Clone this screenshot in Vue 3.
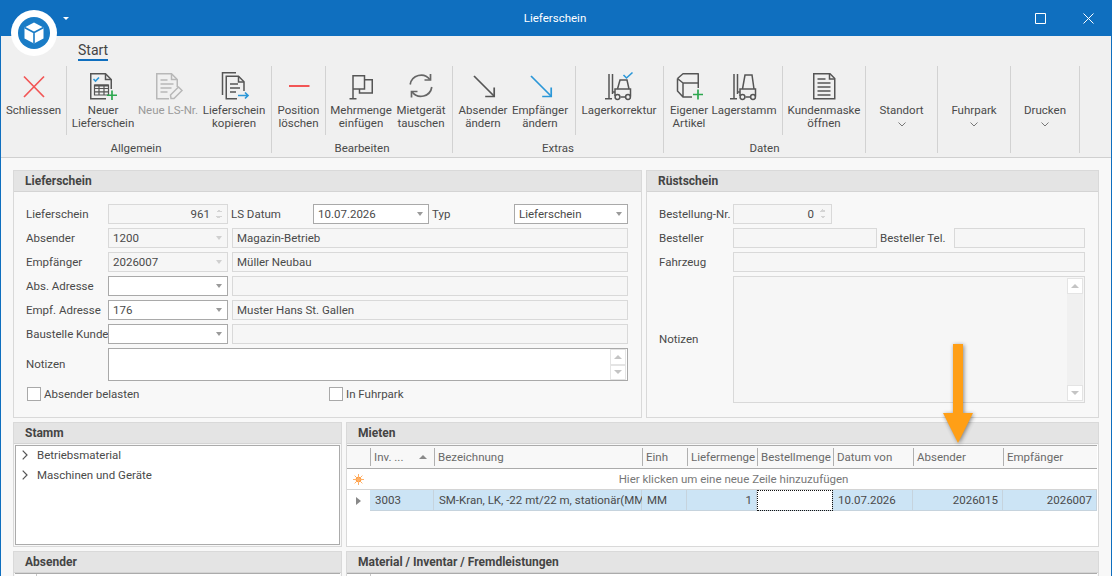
<template>
  <div class="window">
    <header class="titlebar">
      <span class="app-caret"></span>
      <span class="title">Lieferschein</span>
      <svg class="win-btn max" width="11" height="11" viewBox="0 0 11 11"><path d="M.5.5h10v10H.5z" fill="none" stroke="#fff" /></svg>
      <svg class="win-btn close" width="11" height="11" viewBox="0 0 11 11"><path d="M.5.5l10 10M10.5.5l-10 10" fill="none" stroke="#fff" /></svg>
    </header>

    <div class="logo">
      <svg width="46" height="46" viewBox="0 0 46 46">
        <circle cx="23" cy="23" r="23" fill="#fff" />
        <circle cx="23" cy="23" r="16" fill="#1a7cc6" />
        <path d="M23 12.5l9.5 5v11L23 33.5l-9.5-5v-11z" fill="#fff" />
        <path d="M13.5 17.5L23 22.5l9.5-5M23 22.5v11" fill="none" stroke="#1a7cc6" stroke-width="1.6" />
      </svg>
    </div>

    <section class="ribbon">
      <div class="tabs"><span class="tab">Start</span></div>
      <div class="groups">
        <div v-for="g in groups" :key="g.id" class="group" :style="{ width: g.w + 'px' }">
          <div class="items">
            <template v-for="(b, i) in g.items" :key="i">
              <div v-if="b.sep" class="sep" :style="{ width: b.sep + 'px' }"></div>
              <div v-else class="rb" :class="{ off: b.off }" :style="{ width: b.w + 'px' }">
                <svg class="rb-icon" width="34" height="32" viewBox="0 0 34 32" fill="none" v-html="icons[b.icon] || ''"></svg>
                <span v-for="line in b.text" :key="line" class="rb-line">{{ line }}</span>
                <svg v-if="b.menu" class="chev" width="8" height="5" viewBox="0 0 8 5"><path d="M.5.5L4 4 7.5.5" fill="none" stroke="#777" /></svg>
              </div>
            </template>
          </div>
          <div class="caption">{{ g.caption }}</div>
        </div>
      </div>
    </section>

    <main class="content">
      <div class="line top-line">
        <section class="panel lief">
          <h2>Lieferschein</h2>
          <div class="form">
            <label>Lieferschein</label>
            <div class="field off spin"><span class="val">961</span><i class="updown"></i></div>
            <label class="ml">LS Datum</label>
            <div class="field combo"><span>10.07.2026</span><i class="tri"></i></div>
            <label class="ml">Typ</label>
            <div class="field combo"><span>Lieferschein</span><i class="tri"></i></div>

            <label>Absender</label>
            <div class="field off combo"><span>1200</span><i class="tri"></i></div>
            <div class="field off wide">Magazin-Betrieb</div>

            <label>Empfänger</label>
            <div class="field off combo"><span>2026007</span><i class="tri"></i></div>
            <div class="field off wide">Müller Neubau</div>

            <label>Abs. Adresse</label>
            <div class="field combo"><span></span><i class="tri"></i></div>
            <div class="field off wide"></div>

            <label>Empf. Adresse</label>
            <div class="field combo"><span>176</span><i class="tri"></i></div>
            <div class="field off wide">Muster Hans St. Gallen</div>

            <label>Baustelle Kunde</label>
            <div class="field combo"><span></span><i class="tri"></i></div>
            <div class="field off wide"></div>

            <label class="tall">Notizen</label>
            <div class="field memo">
              <div class="vscroll"><b class="up"></b><b class="down"></b></div>
            </div>
          </div>
          <div class="checks">
            <div class="check first"><i></i>Absender belasten</div>
            <div class="check"><i></i>In Fuhrpark</div>
          </div>
        </section>

        <section class="panel ruest">
          <h2>Rüstschein</h2>
          <div class="form2">
            <label>Bestellung-Nr.</label>
            <div class="field off spin short"><span class="val">0</span><i class="updown"></i></div>
            <span></span>
            <span></span>

            <label>Besteller</label>
            <div class="field off"></div>
            <label class="ml">Besteller Tel.</label>
            <div class="field off"></div>

            <label>Fahrzeug</label>
            <div class="field off span3"></div>

            <label class="tall2">Notizen</label>
            <div class="field off span3 memo2">
              <div class="vscroll"><b class="up"></b><b class="down"></b></div>
            </div>
          </div>
        </section>
      </div>

      <div class="line mid-line">
        <section class="panel side">
          <h2>Stamm</h2>
          <div class="tree">
            <div v-for="t in tree" :key="t" class="node">
              <svg width="6" height="10" viewBox="0 0 6 10"><path d="M.7.7L5 5 .7 9.3" fill="none" stroke="#555" stroke-width="1.2" /></svg>
              <span>{{ t }}</span>
            </div>
          </div>
        </section>

        <section class="panel main-grid">
          <h2>Mieten</h2>
          <div class="grid">
            <div class="g-row g-head">
              <div class="g-ind"></div>
              <div v-for="c in columns" :key="c.name" class="g-hcell">
                <span>{{ c.name }}</span>
                <i v-if="c.sort" class="sort"></i>
              </div>
            </div>
            <div class="g-new">
              <div class="g-ind">
                <svg width="11" height="11" viewBox="0 0 11 11">
                  <circle cx="5.5" cy="5.5" r="2.8" fill="#ff9a3c" />
                  <path d="M5.5 0v11M0 5.5h11M1.6 1.6l7.8 7.8M9.4 1.6l-7.8 7.8" stroke="#ffb066" />
                </svg>
              </div>
              <div class="g-hint">Hier klicken um eine neue Zeile hinzuzufügen</div>
            </div>
            <div class="g-row g-data">
              <div class="g-ind"><i class="rowmark"></i></div>
              <div v-for="c in columns" :key="c.name" class="g-cell" :class="{ num: c.num, focus: c.focus }">{{ c.value }}</div>
            </div>
          </div>
        </section>
      </div>

      <div class="line low-line">
        <section class="panel side">
          <h2>Absender</h2>
          <div class="stub left-stub"><i></i></div>
        </section>
        <section class="panel main-grid">
          <h2>Material / Inventar / Fremdleistungen</h2>
          <div class="stub right-stub"><i></i></div>
        </section>
      </div>
    </main>

    <svg class="arrow" width="46" height="110" viewBox="0 0 46 110">
      <path d="M18 2h10v69h10L23 101 8 71h10z" fill="#ff9f16" />
    </svg>
  </div>
</template>

<script setup>
const ink = '#555'
const blue = '#2b97d8'
const green = '#2da84f'
const red = '#f25555'
const gray = '#b8b8b8'

const forklift = (roof) => `
  <g stroke="${ink}" stroke-width="1.5">
    <path d="M7 4v24M10.5 4v20M3 28.75h7" />
    <path d="M10.5 22H13M13 26v-7h15.5v7.5" />
    <path d="M15.5 19l2.5-${19 - roof}h7l2 ${19 - roof}" />
    <path d="M18.5 27h5" />
    <circle cx="15.5" cy="27" r="2.4" />
    <circle cx="26" cy="27" r="2.4" />
  </g>`

const icons = {
  close: `<path d="M7 6.5l20 20.5M27 6.5L7 27" stroke="${red}" stroke-width="1.7" />`,
  newDoc: `<g stroke="${ink}" stroke-width="1.5">
      <path d="M20 28.75H4.75V3.75H19.5L25.25 9.5V19" /><path d="M19.5 4v5.5H25" />
      <path d="M8.5 15h14v10h-14zM8.5 18.5h14M8.5 21.8h14M13 15v10M18 15v10" stroke-width="1.2" />
      <path d="M8.5 15.5h14" stroke-width="2" /></g>
    <path d="M7.5 9l2 2 3.5-3.5" stroke="${blue}" stroke-width="1.6" />
    <path d="M26 20.5v9.5M21 25.25h10" stroke="${green}" stroke-width="1.7" />`,
  newNo: `<g stroke="${gray}" stroke-width="1.5">
      <path d="M18 28.75H5.75V3.75H20.5L26.25 9.5V17" /><path d="M20.5 4v5.5H26" />
      <path d="M9.5 10h7M9.5 14h13M9.5 18h11M9.5 22h7" />
      <path d="M20 28.5l-.5-3.5 8-8 3.5 3.5-8 8z" /></g>`,
  copy: `<g stroke="${ink}" stroke-width="1.5">
      <path d="M5.5 25V2.75H19" /><path d="M20 28.75H9.25V6.25H21.5L27 11.75V21" /><path d="M21.5 6.5v5.5H27" />
      <path d="M13 14h8M13 18h10M13 22h6" /></g>
    <path d="M21 25.5h10M28 22.5l3 3-3 3" stroke="${blue}" stroke-width="1.7" />`,
  minus: `<path d="M7 16h20.5" stroke="${red}" stroke-width="2" />`,
  flag: `<g stroke="${ink}" stroke-width="1.5">
      <path d="M9 29V5.75H20.5V19H9" /><path d="M20.5 9.75H28.25V23H15.5V19" /><path d="M5.5 28.75h7" /></g>`,
  swap: `<g stroke="#666" stroke-width="1.7">
      <path d="M6.2 14.5A11 11 0 0 1 25.8 9.5" /><path d="M26.5 4v6H20.5" />
      <path d="M27.8 17A11 11 0 0 1 8.2 22" /><path d="M7.5 27.5V21.5H13.5" /></g>`,
  arrowDark: `<g stroke="${ink}" stroke-width="1.7"><path d="M8 6l20 20" /><path d="M28.2 17.5v9h-9" /></g>`,
  arrowBlue: `<g stroke="${blue}" stroke-width="1.7"><path d="M8 6l20 20" /><path d="M28.2 17.5v9h-9" /></g>`,
  fork: forklift(10) + `<path d="M21.5 5l3 3 6-5.5" stroke="${blue}" stroke-width="1.6" />`,
  forkPlain: forklift(5),
  cube: `<g stroke="${ink}" stroke-width="1.5" stroke-linejoin="round">
      <path d="M5.5 8.5L11 3.75H26.25V18M5.5 8.5V21L11 27H20M5.5 8.5L11 13V27M11 13H26.25" /></g>
    <path d="M26 19.5v10M21 24.5h10" stroke="${green}" stroke-width="1.7" />`,
  sheet: `<g stroke="${ink}" stroke-width="1.5">
      <path d="M6.75 28.75V3.75H23L27.75 8.5V28.75Z" /><path d="M22.5 4v5h5" />
      <path d="M10.5 9h8M10.5 13h13M10.5 17h13M10.5 21h13M10.5 25h13" /></g>`
}

const groups = [
  { id: 1, w: 271, caption: 'Allgemein', items: [
    { w: 65, icon: 'close', text: ['Schliessen'] },
    { sep: 1 },
    { w: 72, icon: 'newDoc', text: ['Neuer', 'Lieferschein'] },
    { w: 58, icon: 'newNo', text: ['Neue LS-Nr.'], off: true },
    { w: 74, icon: 'copy', text: ['Lieferschein', 'kopieren'] }
  ] },
  { id: 2, w: 181, caption: 'Bearbeiten', items: [
    { w: 53, icon: 'minus', text: ['Position', 'löschen'] },
    { sep: 1 },
    { w: 70, icon: 'flag', text: ['Mehrmenge', 'einfügen'] },
    { w: 50, icon: 'swap', text: ['Mietgerät', 'tauschen'] }
  ] },
  { id: 3, w: 211, caption: 'Extras', items: [
    { w: 60, icon: 'arrowDark', text: ['Absender', 'ändern'] },
    { w: 54, icon: 'arrowBlue', text: ['Empfänger', 'ändern'] },
    { sep: 9 },
    { w: 86, icon: 'fork', text: ['Lagerkorrektur'] }
  ] },
  { id: 4, w: 202, caption: 'Daten', items: [
    { w: 50, icon: 'cube', text: ['Eigener', 'Artikel'] },
    { w: 60, icon: 'forkPlain', text: ['Lagerstamm'] },
    { sep: 9 },
    { w: 82, icon: 'sheet', text: ['Kundenmaske', 'öffnen'] }
  ] },
  { id: 5, w: 72, caption: '', items: [{ w: 71, text: ['Standort'], menu: true }] },
  { id: 6, w: 73, caption: '', items: [{ w: 72, text: ['Fuhrpark'], menu: true }] },
  { id: 7, w: 69, caption: '', items: [{ w: 68, text: ['Drucken'], menu: true }] }
]

const tree = ['Betriebsmaterial', 'Maschinen und Geräte']

const columns = [
  { name: 'Inv. ...', value: '3003', sort: true },
  { name: 'Bezeichnung', value: 'SM-Kran, LK, -22 mt/22 m, stationär(MM)' },
  { name: 'Einh', value: 'MM' },
  { name: 'Liefermenge', value: '1', num: true },
  { name: 'Bestellmenge', value: '', focus: true },
  { name: 'Datum von', value: '10.07.2026' },
  { name: 'Absender', value: '2026015', num: true },
  { name: 'Empfänger', value: '2026007', num: true }
]
</script>

<style>
html, body { margin: 0; background: #f8f8f8; }
</style>

<style scoped>
* { box-sizing: border-box; }
.window {
  position: relative;
  width: 1112px;
  height: 576px;
  overflow: hidden;
  display: flex;
  flex-direction: column;
  background: #f8f8f8;
  border-left: 1px solid #0f6fbf;
  border-right: 1px solid #0f6fbf;
  font: 11.5px/13px Roboto, sans-serif;
  color: #4a4a4a;
}
.titlebar {
  position: relative;
  flex: none;
  height: 36px;
  margin: 0 -1px;
  background: #0f6fbf;
  color: #fff;
  display: flex;
  align-items: center;
  justify-content: center;
}
.title { margin-left: -2px; }
.app-caret {
  position: absolute;
  left: 63px;
  top: 17px;
  border: 3px solid transparent;
  border-top-color: #fff;
}
.win-btn { position: absolute; top: 13px; }
.max { left: 1035px; }
.close { left: 1083px; }
.logo {
  position: absolute;
  left: 10px;
  top: 10px;
  width: 46px;
  height: 46px;
}
.ribbon {
  flex: none;
  height: 122px;
  background: #f0f0f0;
  border-bottom: 1px solid #d0d0d0;
}
.tabs {
  height: 26px;
  padding-left: 77px;
}
.tab {
  display: inline-block;
  height: 25px;
  padding-top: 6px;
  font-size: 14px;
  line-height: 16px;
  color: #444;
  border-bottom: 2px solid #0f6fbf;
}
.groups {
  display: flex;
  margin-top: 4px;
}
.group {
  flex: none;
  height: 87px;
  border-right: 1px solid #d2d2d2;
}
.items {
  display: flex;
  height: 69px;
}
.rb {
  flex: none;
  display: flex;
  flex-direction: column;
  align-items: center;
  padding-top: 4px;
  white-space: nowrap;
}
.rb-icon {
  flex: none;
  margin-bottom: 2px;
}
.rb.off { color: #9a9a9a; }
.chev { margin-top: 5px; }
.sep {
  flex: none;
  border-right: 1px solid #d2d2d2;
}
.caption {
  padding-top: 7px;
  line-height: 13px;
  text-align: center;
}
.content {
  flex: 1;
  min-height: 0;
  padding: 12px 12px 0;
}
.line {
  display: flex;
  gap: 4px;
  margin-bottom: 4px;
}
.top-line { height: 248px; }
.mid-line { height: 125px; }
.low-line { height: 100px; }
.panel {
  flex: none;
  display: flex;
  flex-direction: column;
  border: 1px solid #d9d9d9;
}
.panel h2 {
  flex: none;
  margin: 0;
  height: 21px;
  padding-left: 11px;
  background: #e4e4e4;
  border-bottom: 1px solid #d4d4d4;
  font-size: 12px;
  font-weight: 700;
  line-height: 20px;
  color: #444;
}
.lief { width: 629px; }
.ruest { width: 453px; }
.side { width: 329px; }
.main-grid { width: 753px; }
.form {
  display: grid;
  grid-template-columns: 82px 120px 85px 116px 85px 114px;
  grid-auto-rows: 20px;
  row-gap: 4px;
  margin: 12px 0 0 12px;
  width: 602px;
}
.form label, .form2 label {
  display: flex;
  align-items: center;
  white-space: nowrap;
}
.form .ml { padding-left: 3px; }
.form2 .ml { padding-left: 3px; }
.field {
  position: relative;
  display: flex;
  align-items: center;
  padding: 0 4px;
  background: #fff;
  border: 1px solid #a9a9a9;
  white-space: nowrap;
}
.field.off {
  background: #f6f6f6;
  border-color: #d9d9d9;
}
.combo { justify-content: space-between; padding-right: 4px; }
.tri {
  border: 3.5px solid transparent;
  border-top: 4px solid #9a9a9a;
  border-bottom: 0;
  margin-right: 1px;
}
.off .tri { border-top-color: #cfcfcf; }
.wide {
  grid-column: 3 / 7;
  margin-left: 4px;
}
.spin .val {
  margin-left: auto;
  margin-right: 13px;
}
.updown {
  position: absolute;
  right: 5px;
  top: 4px;
  width: 6px;
  height: 10px;
  background:
    linear-gradient(to top left, #d4d4d4 50%, transparent 50%) 0 0 / 3px 3px no-repeat,
    linear-gradient(to top right, #d4d4d4 50%, transparent 50%) 3px 0 / 3px 3px no-repeat,
    linear-gradient(to bottom left, #d4d4d4 50%, transparent 50%) 0 7px / 3px 3px no-repeat,
    linear-gradient(to bottom right, #d4d4d4 50%, transparent 50%) 3px 7px / 3px 3px no-repeat;
}
.memo {
  grid-column: 2 / 7;
  height: 33px;
}
.tall { height: 33px; }
.vscroll {
  position: absolute;
  right: 1px;
  top: 1px;
  bottom: 1px;
  width: 16px;
  background: #f0f0f0;
  display: flex;
  flex-direction: column;
  justify-content: space-between;
}
.vscroll b {
  height: 16px;
  background: #fff;
  border: 1px solid #e4e4e4;
  display: flex;
  align-items: center;
  justify-content: center;
}
.vscroll b::after {
  content: "";
  border: 4px solid transparent;
}
.vscroll .up::after { border-top: 0; border-bottom: 4px solid #c4c4c4; }
.vscroll .down::after { border-bottom: 0; border-top: 4px solid #c4c4c4; }
.memo .vscroll { top: 0; bottom: 0; background: #f4f4f4; }
.memo .vscroll b { height: 15.5px; }
.checks {
  display: flex;
  margin: 19px 0 0 13px;
}
.check {
  display: flex;
  align-items: center;
  gap: 3px;
  height: 14px;
}
.check.first { width: 302px; }
.check i {
  width: 14px;
  height: 14px;
  background: #fff;
  border: 1px solid #a9a9a9;
}
.form2 {
  display: grid;
  grid-template-columns: 74px 144px 77px 131px;
  grid-auto-rows: 20px;
  row-gap: 4px;
  margin: 12px 0 0 12px;
}
.short { width: 99px; }
.span3 { grid-column: 2 / 5; }
.memo2 { height: 127px; }
.tall2 { height: 127px; }
.tree {
  flex: 1;
  margin: 1px;
  background: #fff;
  border: 1px solid #ababab;
}
.node {
  display: flex;
  align-items: center;
  height: 20px;
  padding-left: 6px;
  gap: 9px;
  white-space: nowrap;
  position: relative;
  top: -1px;
}
.grid {
  flex: 1;
  margin-top: 1px;
  background: #fff;
  color: #4a4a4a;
}
.g-row {
  display: grid;
  grid-template-columns: 23px 64px 208px 45px 70px 76px 80px 90px 94px;
}
.g-ind {
  display: flex;
  align-items: center;
  justify-content: center;
}
.g-head {
  height: 24px;
  width: 750px;
  background: #f8f8f8;
  border-top: 1px solid #ababab;
  border-bottom: 1px solid #ababab;
  color: #6a6a6a;
}
.g-hcell {
  position: relative;
  margin: 2px 0;
  padding-left: 3px;
  line-height: 18px;
  border-left: 1px solid #b0b0b0;
  white-space: nowrap;
}
.sort {
  position: absolute;
  left: 48px;
  top: 7px;
  border: 4px solid transparent;
  border-top: 0;
  border-bottom: 4px solid #8a8a8a;
}
.g-new {
  display: flex;
  width: 750px;
  height: 21px;
  border-bottom: 1px solid #d4d4d4;
}
.g-new .g-ind { width: 23px; }
.g-hint {
  flex: 1;
  text-align: center;
  line-height: 20px;
  color: #777;
}
.g-data {
  height: 21px;
  width: 750px;
}
.rowmark {
  border: 4px solid transparent;
  border-left: 5px solid #888;
  border-right: 0;
}
.g-cell {
  padding: 0 4px 0 5px;
  line-height: 20px;
  background: #cce4f5;
  border-right: 1px solid #c6d3dd;
  border-bottom: 1px solid #c6d3dd;
  white-space: nowrap;
}
.num { text-align: right; }
.focus {
  background: #fff;
  outline: 1px dotted #111;
  outline-offset: -1px;
}
.stub {
  flex: 1;
  background: #fff;
  border-top: 1px solid #ababab;
  display: flex;
}
.left-stub { margin: 0 1px; }
.right-stub { margin-right: 1px; }
.stub i {
  display: block;
  border-right: 1px solid #c8c8c8;
}
.left-stub i { width: 22px; }
.right-stub i { width: 24px; }
.arrow {
  position: absolute;
  left: 934px;
  top: 342px;
  filter: drop-shadow(1px 1px 2px rgba(0, 0, 0, 0.45));
}
</style>
